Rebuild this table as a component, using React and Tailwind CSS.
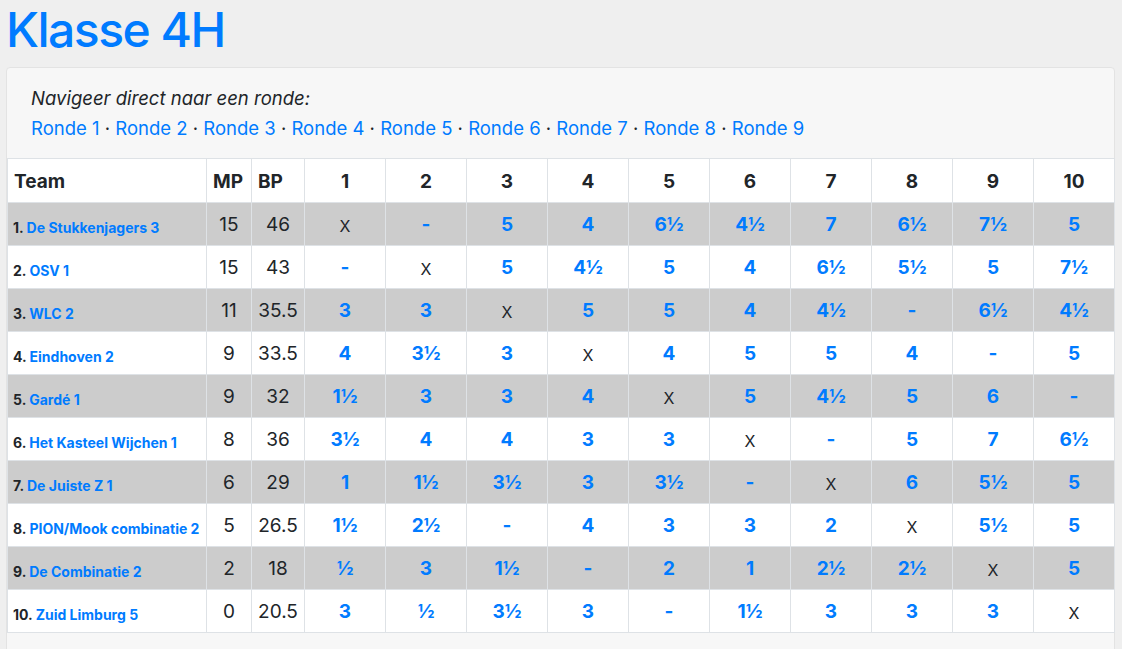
const ROUNDS = [1, 2, 3, 4, 5, 6, 7, 8, 9];

const TEAMS = [
  { name: "De Stukkenjagers 3", mp: "15", bp: "46", scores: ["X", "-", "5", "4", "6½", "4½", "7", "6½", "7½", "5"] },
  { name: "OSV 1", mp: "15", bp: "43", scores: ["-", "X", "5", "4½", "5", "4", "6½", "5½", "5", "7½"] },
  { name: "WLC 2", mp: "11", bp: "35.5", scores: ["3", "3", "X", "5", "5", "4", "4½", "-", "6½", "4½"] },
  { name: "Eindhoven 2", mp: "9", bp: "33.5", scores: ["4", "3½", "3", "X", "4", "5", "5", "4", "-", "5"] },
  { name: "Gardé 1", mp: "9", bp: "32", scores: ["1½", "3", "3", "4", "X", "5", "4½", "5", "6", "-"] },
  { name: "Het Kasteel Wijchen 1", mp: "8", bp: "36", scores: ["3½", "4", "4", "3", "3", "X", "-", "5", "7", "6½"] },
  { name: "De Juiste Z 1", mp: "6", bp: "29", scores: ["1", "1½", "3½", "3", "3½", "-", "X", "6", "5½", "5"] },
  { name: "PION/Mook combinatie 2", mp: "5", bp: "26.5", scores: ["1½", "2½", "-", "4", "3", "3", "2", "X", "5½", "5"] },
  { name: "De Combinatie 2", mp: "2", bp: "18", scores: ["½", "3", "1½", "-", "2", "1", "2½", "2½", "X", "5"] },
  { name: "Zuid Limburg 5", mp: "0", bp: "20.5", scores: ["3", "½", "3½", "3", "-", "1½", "3", "3", "3", "X"] },
];

function ScoreCell({ value }) {
  if (value === "X") {
    return <td className="border border-[#dee2e6] pt-[3px] text-center text-[16px] text-[#212529]">X</td>;
  }
  return (
    <td className="border border-[#dee2e6] pt-[3px] text-center">
      <a href="#" className="text-[19px] font-bold text-[#007bff]">{value}</a>
    </td>
  );
}

export default function App() {
  return (
    <div className="min-h-screen bg-[#efefef] pl-[6px] pr-[7px] font-['Inter',sans-serif] text-[#212529]">
      <h1 className="pt-[1px] text-[48px] font-medium leading-[58px] tracking-[-1.5px] text-[#007bff]">Klasse 4H</h1>
      <div className="mt-[8px] rounded-t-[4px] border border-[#e3e3e3] bg-[#f7f7f7] pb-[40px]">
        <div className="px-[24px] pt-[15px] pb-[15px] text-[18.5px] leading-[30px]">
          <p className="italic text-[#212529]">Navigeer direct naar een ronde:</p>
          <p>
            {ROUNDS.map((r, i) => (
              <span key={r}>
                {i > 0 && <span className="text-[#212529]"> · </span>}
                <a href="#" className="text-[#007bff]">Ronde {r}</a>
              </span>
            ))}
          </p>
        </div>
        <table className="w-[1107px] table-fixed border-collapse bg-white">
          <thead>
            <tr className="h-[44px] text-[19px] font-bold">
              <th className="w-[199px] border border-[#dee2e6] px-[6px] pt-[3px] text-left">Team</th>
              <th className="w-[45px] border border-[#dee2e6] px-[6px] pt-[3px] text-left">MP</th>
              <th className="w-[53px] border border-[#dee2e6] px-[6px] pt-[3px] text-left">BP</th>
              {[1, 2, 3, 4, 5, 6, 7, 8, 9, 10].map((n) => (
                <th key={n} className="w-[81px] border border-[#dee2e6] pt-[3px] text-center">{n}</th>
              ))}
            </tr>
          </thead>
          <tbody>
            {TEAMS.map((t, i) => (
              <tr key={t.name} className={`h-[43px] ${i % 2 === 0 ? "bg-[#cccccc]" : "bg-white"}`}>
                <td className="whitespace-nowrap border border-[#dee2e6] px-[5px] pt-[6px] text-[14px] font-bold">
                  {i + 1}. <a href="#" className="text-[#007bff]">{t.name}</a>
                </td>
                <td className="border border-[#dee2e6] pt-[3px] text-center text-[19px]">{t.mp}</td>
                <td className="border border-[#dee2e6] pt-[3px] text-center text-[19px]">{t.bp}</td>
                {t.scores.map((s, j) => (
                  <ScoreCell key={j} value={s} />
                ))}
              </tr>
            ))}
          </tbody>
        </table>
      </div>
    </div>
  );
}
